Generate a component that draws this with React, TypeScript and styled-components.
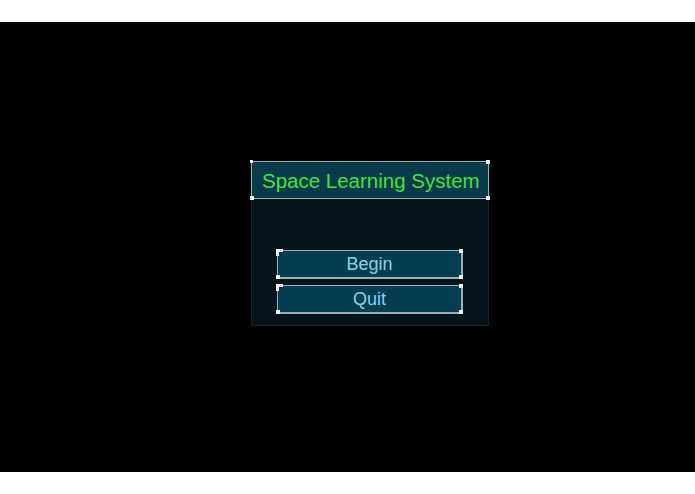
import React from "react";
import styled, { createGlobalStyle } from "styled-components";

const GlobalStyle = createGlobalStyle`
  html, body {
    margin: 0;
    padding: 0;
    background: #fff;
    font-family: "Liberation Sans", Arial, sans-serif;
  }
`;

const Screen = styled.div`
  margin: 22px 0;
  height: 450px;
  background: #010101;
  box-sizing: border-box;
  padding: 139px 0 0 251px;
  display: flex;
  align-items: flex-start;
`;

const Panel = styled.div`
  width: 238px;
  height: 165px;
  background: #04141a;
  box-shadow: inset 0 0 0 1px #16272c;
  display: flex;
  flex-direction: column;
  position: relative;
`;

const TitleBar = styled.div`
  position: relative;
  height: 38px;
  box-sizing: border-box;
  background: #083a4b;
  border: 1px solid #98acb2;
  display: flex;
  align-items: center;
  padding: 1px 0 0 10px;
  color: #3ee43a;
  font-size: 20.5px;
  transform-origin: left center;
  white-space: nowrap;
`;

const ButtonStack = styled.div`
  display: flex;
  flex-direction: column;
  gap: 6px;
  margin: 51px 0 0 26px;
  width: 186px;
`;

const MenuButton = styled.button`
  position: relative;
  height: 29px;
  box-sizing: border-box;
  background: #063e51;
  border: 1px solid #9fb0b5;
  border-width: 1px 2px 2px 1px;
  color: #8fcfe2;
  font-family: "Liberation Sans", Arial, sans-serif;
  font-size: 18px;
  padding: 0;
  cursor: pointer;
`;

const Handle = styled.span<{ $x: "l" | "r"; $y: "t" | "b"; $size?: number }>`
  position: absolute;
  width: ${(p) => p.$size ?? 3}px;
  height: ${(p) => p.$size ?? 3}px;
  background: #f4f8f8;
  ${(p) => (p.$x === "l" ? "left" : "right")}: -2px;
  ${(p) => (p.$y === "t" ? "top" : "bottom")}: -2px;
`;

// bracket on the anchor corner of a selected button
const Anchor = styled.span`
  position: absolute;
  left: -2px;
  top: -2px;
  width: 7px;
  height: 7px;
  border-top: 3px solid #f4f8f8;
  border-left: 3px solid #f4f8f8;
  box-sizing: border-box;
`;

const Corners: React.FC<{ anchor?: boolean }> = ({ anchor }) => (
  <>
    {anchor ? <Anchor /> : <Handle $x="l" $y="t" />}
    <Handle $x="r" $y="t" $size={4} />
    <Handle $x="l" $y="b" $size={4} />
    <Handle $x="r" $y="b" $size={4} />
  </>
);

const App: React.FC = () => (
  <>
    <GlobalStyle />
    <Screen>
      <Panel>
        <TitleBar>
          Space Learning System
          <Corners />
        </TitleBar>
        <ButtonStack>
          <MenuButton>
            Begin
            <Corners anchor />
          </MenuButton>
          <MenuButton>
            Quit
            <Corners anchor />
          </MenuButton>
        </ButtonStack>
      </Panel>
    </Screen>
  </>
);

export default App;
